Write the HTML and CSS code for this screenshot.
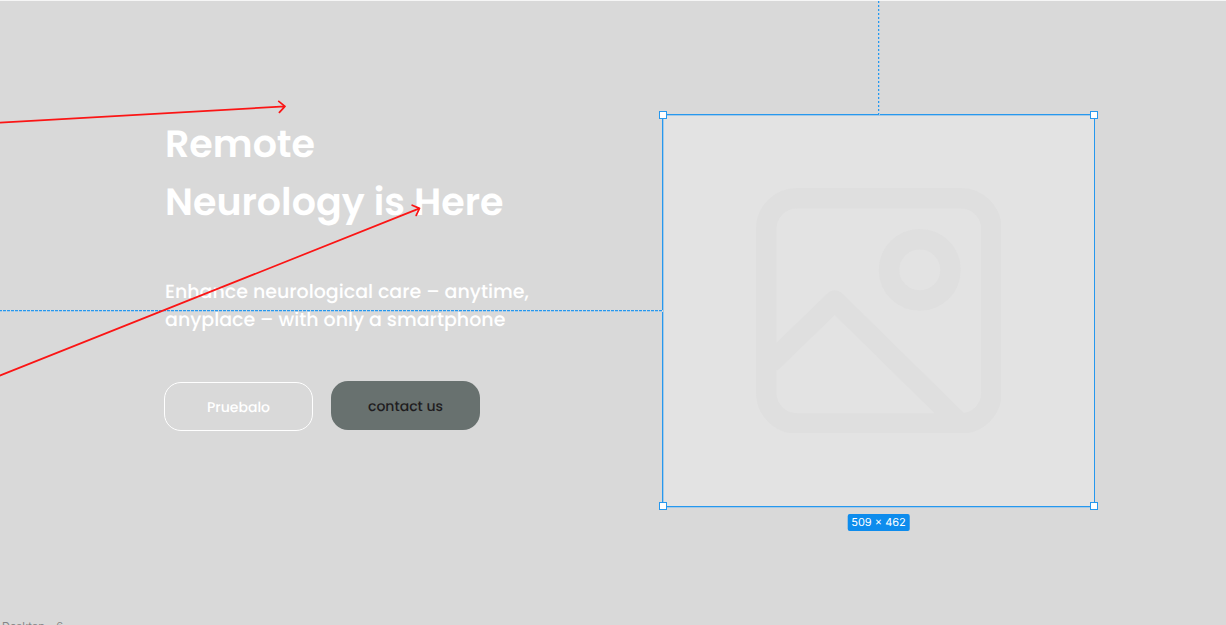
FILE: index.html
```html
<!DOCTYPE html>
<html lang="en">
<head>
<meta charset="utf-8">
<meta name="viewport" content="width=device-width, initial-scale=1">
<title>Remote Neurology is Here</title>
<link rel="stylesheet" href="styles.css">
</head>
<body>
<div class="canvas">
  <main class="hero">
    <section class="intro">
      <h1 class="title">Remote<br>Neurology is Here</h1>
      <p class="lead">Enhance neurological care – anytime,<br>anyplace – with only a smartphone</p>
      <div class="actions">
        <button class="button button-outline" type="button">Pruebalo</button>
        <button class="button button-filled" type="button">contact us</button>
      </div>
    </section>
    <div class="selection">
      <svg class="placeholder" viewBox="0 0 24 24" fill="none" stroke="currentColor" stroke-width="2" stroke-linejoin="round" aria-hidden="true">
        <rect x="1" y="1" width="22" height="22" rx="3"/>
        <circle cx="16" cy="8" r="3"/>
        <path d="M1.4 17.1 7.7 11 19.7 22.8"/>
      </svg>
      <span class="guide guide-vertical"></span>
      <span class="guide guide-horizontal"></span>
      <span class="handle top left"></span>
      <span class="handle top right"></span>
      <span class="handle bottom left"></span>
      <span class="handle bottom right"></span>
      <span class="dimensions">509 × 462</span>
    </div>
  </main>
  <div class="frame-label">Desktop - 6</div>
  <svg class="connectors" width="430" height="390" fill="none" stroke="currentColor" stroke-width="1.7" stroke-linecap="round" stroke-linejoin="round" aria-hidden="true">
    <path d="M-2 122.7 285 106.4M278.8 101.4 285 106.4 279.4 112.4"/>
    <path d="M-2 376.3 419.5 208.4M412.2 205.2 419.5 208.4 416.2 215.4"/>
  </svg>
</div>
</body>
</html>
```
FILE: styles.css
```css
* {
  box-sizing: border-box;
}

body {
  margin: 0;
  background: #d9d9d9;
  font-family: Poppins, Inter, sans-serif;
  text-rendering: geometricPrecision;
}

.canvas {
  position: relative;
  height: 100vh;
  overflow: hidden;
  border-top: 1px solid #f6f6f6;
}

.hero {
  display: grid;
  grid-template-columns: 498fr 433fr;
  padding: 113px 131px 0 164px;
}

.title {
  margin: 2px 0 0 1px;
  color: #fff;
  font-size: 38px;
  font-weight: 600;
  line-height: 58px;
}

.lead {
  margin: 46px 0 0 1px;
  color: #fff;
  font-size: 19px;
  font-weight: 500;
  line-height: 28px;
}

.actions {
  display: flex;
  gap: 18px;
  margin-top: 47px;
}

.button {
  width: 149px;
  height: 49px;
  padding: 0;
  border: 0;
  border-radius: 17px;
  font: 500 14px/20px Poppins, Inter, sans-serif;
  text-rendering: inherit;
}

.button-outline {
  margin-top: 1px;
  border: 1px solid #fff;
  background: transparent;
  color: #fff;
}

.button-filled {
  background: #68716f;
  color: #1f1d20;
}

.selection {
  position: relative;
  display: flex;
  align-items: center;
  justify-content: center;
  aspect-ratio: 433 / 393;
  border: 1px solid #2698ee;
  background: #e3e3e3;
  box-shadow: inset 1px 1px #a5c9e6, 0 1px #a5c9e6;
}

.placeholder {
  width: 57%;
  color: #dfdfdf;
}

.guide {
  position: absolute;
}

.guide-vertical {
  bottom: 100%;
  left: calc(50% - 1px);
  width: 2px;
  height: 114px;
  background:
    repeating-linear-gradient(to bottom, transparent 0 2px, #d9d9d9 2px 4px),
    linear-gradient(to right, #2698ee 0 1px, #a5c9e6 1px 2px);
}

.guide-horizontal {
  top: calc(50% - 1px);
  right: 100%;
  width: 100vw;
  height: 2px;
  background:
    repeating-linear-gradient(to left, #d9d9d9 0 1px, transparent 1px 4px),
    linear-gradient(to bottom, #2698ee 0 1px, #a5c9e6 1px 2px);
}

.handle {
  position: absolute;
  width: 8px;
  height: 8px;
  border: 1px solid #2698ee;
  background: #fff;
}

.top {
  top: -4px;
}

.bottom {
  bottom: -4px;
}

.left {
  left: -4px;
}

.right {
  right: -4px;
}

.dimensions {
  position: absolute;
  top: calc(100% + 8px);
  left: 50%;
  padding: 0 4px;
  border-radius: 2px;
  background: #0d8ced;
  color: #fff;
  font: 400 11px/17px Inter, sans-serif;
  white-space: nowrap;
  transform: translateX(-50%);
}

.frame-label {
  margin: 111px 0 0 2px;
  color: #858585;
  font: 400 11px/16px Inter, sans-serif;
}

.connectors {
  position: absolute;
  top: -1px;
  left: 0;
  color: #fb1515;
  pointer-events: none;
}
```
